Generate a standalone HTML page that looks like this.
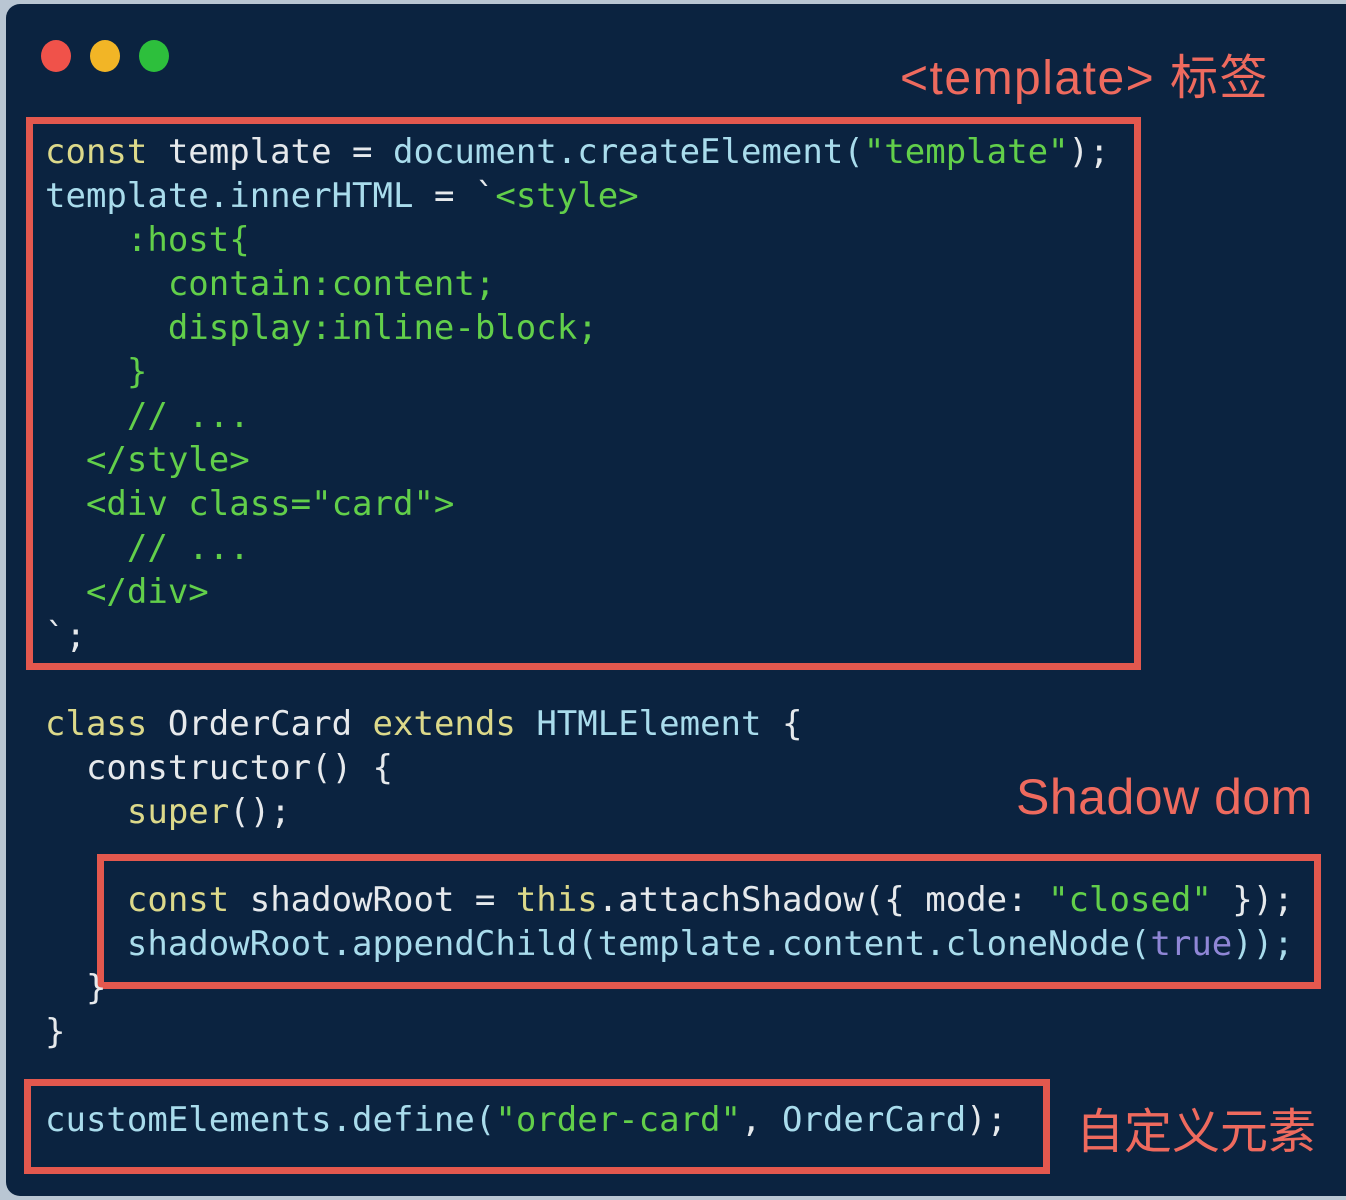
<!DOCTYPE html>
<html><head><meta charset="utf-8"><style>
html,body{margin:0;padding:0;width:1346px;height:1200px;overflow:hidden;background:#b9c6d3;}
.panel{position:absolute;left:6px;top:4px;width:1360px;height:1192px;background:#0b2340;border-radius:14px;}
.dot{position:absolute;top:40px;width:30px;height:32px;border-radius:50%;}
pre{position:absolute;left:45px;top:130px;margin:0;font-family:"DejaVu Sans Mono","Liberation Mono",monospace;font-size:34px;line-height:44px;color:#e6e9ec;}
.k{color:#dcd98a}.c{color:#a9dcec}.g{color:#62cf4a}.p{color:#8f86d6}
.box{position:absolute;border:7px solid #e3584e;box-sizing:border-box;}
.lbl{position:absolute;color:#ee6a5e;font-family:"Liberation Sans","Noto Sans CJK SC",sans-serif;white-space:nowrap;}
</style></head><body>
<div class="panel"></div>
<div class="dot" style="left:41px;background:#f0524a"></div>
<div class="dot" style="left:90px;background:#f2b526"></div>
<div class="dot" style="left:139px;background:#2dbf3c"></div>
<div class="box" style="left:26px;top:117px;width:1115px;height:553px"></div>
<div class="box" style="left:97px;top:854px;width:1224px;height:135px"></div>
<div class="box" style="left:24px;top:1079px;width:1026px;height:95px"></div>
<div class="lbl" style="left:900px;top:38px;font-size:48px;letter-spacing:1.5px;">&lt;template&gt; 标签</div>
<div class="lbl" style="left:1016px;top:768px;font-size:50px;letter-spacing:0.5px;">Shadow dom</div>
<div class="lbl" style="left:1076px;top:1092px;font-size:48px;">自定义元素</div>
<pre><span class="k">const</span> template = <span class="c">document.createElement(</span><span class="g">"template"</span>);
<span class="c">template.innerHTML</span> = `<span class="g">&lt;style&gt;</span>
<span class="g">    :host{</span>
<span class="g">      contain:content;</span>
<span class="g">      display:inline-block;</span>
<span class="g">    }</span>
<span class="g">    // ...</span>
<span class="g">  &lt;/style&gt;</span>
<span class="g">  &lt;div class="card"&gt;</span>
<span class="g">    // ...</span>
<span class="g">  &lt;/div&gt;</span>
`;

<span class="k">class</span> OrderCard <span class="k">extends</span> <span class="c">HTMLElement</span> {
  constructor() {
    <span class="k">super</span>();

    <span class="k">const</span> shadowRoot = <span class="k">this</span>.attachShadow({ mode: <span class="g">"closed"</span> });
    <span class="c">shadowRoot.appendChild(template.content.cloneNode(</span><span class="p">true</span><span class="c">));</span>
  }
}

<span class="c">customElements.define(</span><span class="g">"order-card"</span>, <span class="c">OrderCard</span>);</pre>
</body></html>
